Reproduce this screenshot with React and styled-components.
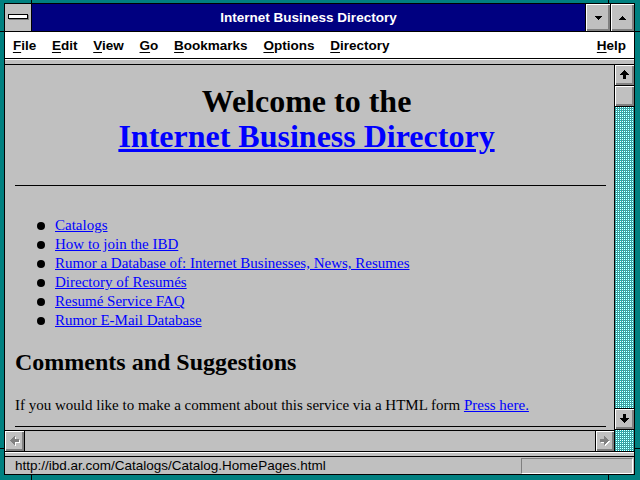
import React from 'react';
import styled, { createGlobalStyle } from 'styled-components';

// Windows 3.1 style browser window
const GlobalStyle = createGlobalStyle`
  html, body {
    margin: 0;
    padding: 0;
    background: #008080;
    overflow: hidden;
  }
  * {
    box-sizing: border-box;
  }
`;

const Frame = styled.div`
  position: relative;
  width: 640px;
  height: 480px;
  padding: 3px 5px 5px 4px;
  background: #008080;
`;

const ResizeMark = styled.span`
  position: absolute;
  background: #000;
  top: ${p => p.$top}px;
  left: ${p => p.$left}px;
  width: ${p => p.$w}px;
  height: ${p => p.$h}px;
`;

const Window = styled.div`
  height: 100%;
  border: 1px solid #000;
  background: #c0c0c0;
  display: flex;
  flex-direction: column;
  font-family: "Liberation Sans", Arial, sans-serif;
`;

const TitleBar = styled.div`
  flex: none;
  height: 28px;
  display: flex;
  border-bottom: 1px solid #000;
`;

const SysBox = styled.div`
  width: 27px;
  border-right: 1px solid #000;
  background: #c0c0c0;
  display: flex;
  align-items: center;
  justify-content: center;
  padding-bottom: 2px;
`;

const SysBar = styled.div`
  width: 20px;
  height: 5px;
  background: #fff;
  border: 1px solid #000;
  box-shadow: 1px 1px 0 #808080;
`;

const Caption = styled.div`
  flex: 1;
  background: #000080;
  color: #fff;
  font-weight: bold;
  font-size: 13.5px;
  display: flex;
  align-items: center;
  justify-content: center;
`;

const TitleButton = styled.div`
  width: ${p => p.$w}px;
  border-left: 1px solid #000;
  background: #c0c0c0;
  box-shadow: inset 1px 1px 0 #fff, inset -1px -1px 0 #808080, inset -2px -2px 0 #808080;
  display: flex;
  align-items: center;
  justify-content: center;
`;

const MenuBar = styled.div`
  flex: none;
  height: 27px;
  display: flex;
  align-items: center;
  background: #fff;
  border-bottom: 1px solid #000;
  font-weight: bold;
  font-size: 13.5px;
  color: #000;
`;

const MenuItem = styled.span`
  padding: 0 7.9px;
  u {
    text-underline-offset: 2px;
  }
`;

const MenuSpacer = styled.span`
  flex: 1;
`;

const Separator = styled.div`
  flex: none;
  height: 6px;
  background: linear-gradient(#fff 0 1px, #c0c0c0 1px);
  border-top: ${p => (p.$top ? '1px solid #000' : 'none')};
  border-bottom: 1px solid #000;
`;

const Body = styled.div`
  flex: none;
  height: 386px;
  display: flex;
`;

const LeftCol = styled.div`
  flex: 1;
  min-width: 0;
  display: flex;
  flex-direction: column;
`;

const Page = styled.div`
  flex: 1;
  overflow: hidden;
  padding: 0 8px 0 10px;
  background: #c0c0c0;
  color: #000;
  font-family: "Liberation Serif", "Times New Roman", serif;
  font-size: 15px;
  line-height: 19px;

  a {
    color: #0000ff;
    text-decoration: underline;
  }
`;

const Heading = styled.h1`
  margin: 19px 0 0;
  padding-right: 8px;
  font-size: 32px;
  line-height: 35px;
  font-weight: bold;
  text-align: center;
`;

const Rule = styled.hr`
  margin: ${p => p.$mt}px 0 0;
  border: none;
  border-top: 1px solid #000;
  height: 0;
`;

const LinkList = styled.ul`
  list-style: none;
  margin: 30px 0 0;
  padding: 0 0 0 22px;
`;

const LinkItem = styled.li`
  display: flex;
  align-items: center;
  gap: 10px;
  height: 19px;
`;

const Bullet = styled.span`
  flex: none;
  width: 8px;
  height: 8px;
  border-radius: 50%;
  background: #000;
`;

const SubHeading = styled.h2`
  margin: 19px 0 0;
  font-size: 24px;
  line-height: 27px;
  font-weight: bold;
`;

const Para = styled.p`
  margin: 20px 0 0;
`;

const HScroll = styled.div`
  flex: none;
  height: 21px;
  display: flex;
  border-top: 1px solid #000;
  background: #c0c0c0;
`;

const ScrollButton = styled.div`
  flex: none;
  width: ${p => p.$w || 19}px;
  height: ${p => p.$h || 20}px;
  background: #c0c0c0;
  border-left: ${p => (p.$bl ? '1px solid #000' : 'none')};
  border-right: ${p => (p.$br ? '1px solid #000' : 'none')};
  border-top: ${p => (p.$bt ? '1px solid #000' : 'none')};
  border-bottom: ${p => (p.$bb ? '1px solid #000' : 'none')};
  box-shadow: inset 1px 1px 0 #fff, inset -1px -1px 0 #808080, inset -2px -2px 0 #808080;
  display: flex;
  align-items: center;
  justify-content: center;
`;

const HTrack = styled.div`
  flex: 1;
`;

const VScroll = styled.div`
  flex: none;
  width: 20px;
  border-left: 1px solid #000;
  display: flex;
  flex-direction: column;
  background: #fff;
`;

const DitherArea = styled.div`
  flex: ${p => (p.$h ? 'none' : '1')};
  height: ${p => (p.$h ? `${p.$h}px` : 'auto')};
  min-height: 0;

  svg {
    display: block;
    width: 100%;
    height: 100%;
  }
`;

const StatusBar = styled.div`
  flex: 1;
  display: flex;
  align-items: center;
  padding-left: 10px;
  font-size: 13.5px;
  color: #000;
`;

const StatusBox = styled.div`
  margin-left: auto;
  margin-right: 1px;
  width: 112px;
  height: 16px;
  border-top: 1px solid #808080;
  border-left: 1px solid #808080;
  border-bottom: 1px solid #fff;
  border-right: 1px solid #fff;
`;

const ARROW = 'M4 0h1v1h1v1h1v1h1v1h1v1H6v4H3V5H0V4h1V3h1V2h1V1h1z';
const ANGLES = { up: 0, right: 90, down: 180, left: 270 };

function Arrow({ dir, disabled }) {
  const rot = `rotate(${ANGLES[dir]} 4.5 4.5)`;
  return (
    <svg width="10" height="10" viewBox="0 0 10 10" shapeRendering="crispEdges">
      {disabled && (
        <g transform="translate(1 1)">
          <path d={ARROW} fill="#fff" transform={rot} />
        </g>
      )}
      <path d={ARROW} fill={disabled ? '#808080' : '#000'} transform={rot} />
    </svg>
  );
}

function Triangle({ down }) {
  const d = down
    ? 'M0 0H7V1H6V2H5V3H4V4H3V3H2V2H1V1H0Z'
    : 'M3 0H4V1H5V2H6V3H7V4H0V3H1V2H2V1H3Z';
  return (
    <svg width="7" height="4" viewBox="0 0 7 4" shapeRendering="crispEdges">
      <path d={d} fill="#000" />
    </svg>
  );
}

// 1px checker texture of the scroll track
function Dither({ id, h }) {
  return (
    <DitherArea $h={h}>
      <svg shapeRendering="crispEdges">
        <defs>
          <pattern id={id} width="2" height="2" patternUnits="userSpaceOnUse">
            <rect width="2" height="2" fill="#00c0c0" />
            <rect x="1" y="0" width="1" height="1" fill="#ffffff" />
            <rect x="0" y="1" width="1" height="1" fill="#808080" />
          </pattern>
        </defs>
        <rect width="100%" height="100%" fill={`url(#${id})`} />
      </svg>
    </DitherArea>
  );
}

const marks = [
  { top: 0, left: 31, w: 1, h: 3 },
  { top: 0, left: 608, w: 1, h: 3 },
  { top: 475, left: 31, w: 1, h: 5 },
  { top: 475, left: 608, w: 1, h: 5 },
  { top: 31, left: 0, w: 4, h: 1 },
  { top: 448, left: 0, w: 4, h: 1 },
  { top: 31, left: 635, w: 5, h: 1 },
  { top: 448, left: 635, w: 5, h: 1 },
];

const menus = ['File', 'Edit', 'View', 'Go', 'Bookmarks', 'Options', 'Directory'];

const links = [
  'Catalogs',
  'How to join the IBD',
  'Rumor a Database of: Internet Businesses, News, Resumes',
  'Directory of Resumés',
  'Resumé Service FAQ',
  'Rumor E-Mail Database',
];

export default function App() {
  return (
    <>
      <GlobalStyle />
      <Frame>
        {marks.map((m, i) => (
          <ResizeMark key={i} $top={m.top} $left={m.left} $w={m.w} $h={m.h} />
        ))}
        <Window>
          <TitleBar>
            <SysBox>
              <SysBar />
            </SysBox>
            <Caption>Internet Business Directory</Caption>
            <TitleButton $w={25}>
              <Triangle down />
            </TitleButton>
            <TitleButton $w={24}>
              <Triangle />
            </TitleButton>
          </TitleBar>

          <MenuBar>
            {menus.map(m => (
              <MenuItem key={m}>
                <u>{m[0]}</u>
                {m.slice(1)}
              </MenuItem>
            ))}
            <MenuSpacer />
            <MenuItem>
              <u>H</u>elp
            </MenuItem>
          </MenuBar>

          <Separator />

          <Body>
            <LeftCol>
              <Page>
                <Heading>
                  Welcome to the
                  <br />
                  <a href="#">Internet Business Directory</a>
                </Heading>
                <Rule $mt={31} />
                <LinkList>
                  {links.map(l => (
                    <LinkItem key={l}>
                      <Bullet />
                      <a href="#">{l}</a>
                    </LinkItem>
                  ))}
                </LinkList>
                <SubHeading>Comments and Suggestions</SubHeading>
                <Para>
                  If you would like to make a comment about this service via a HTML form{' '}
                  <a href="#">Press here.</a>
                </Para>
                <Rule $mt={11} />
              </Page>
              <HScroll>
                <ScrollButton $w={20} $h={20} $br>
                  <Arrow dir="left" disabled />
                </ScrollButton>
                <HTrack />
                <ScrollButton $w={19} $h={20} $bl>
                  <Arrow dir="right" disabled />
                </ScrollButton>
              </HScroll>
            </LeftCol>
            <VScroll>
              <ScrollButton $h={21} $bb>
                <Arrow dir="up" />
              </ScrollButton>
              <ScrollButton $h={21} $bb />
              <Dither id="dither-track" />
              <ScrollButton $h={22} $bt $bb>
                <Arrow dir="down" />
              </ScrollButton>
              <Dither id="dither-corner" h={21} />
            </VScroll>
          </Body>

          <Separator $top />

          <StatusBar>
            http://ibd.ar.com/Catalogs/Catalog.HomePages.html
            <StatusBox />
          </StatusBar>
        </Window>
      </Frame>
    </>
  );
}
